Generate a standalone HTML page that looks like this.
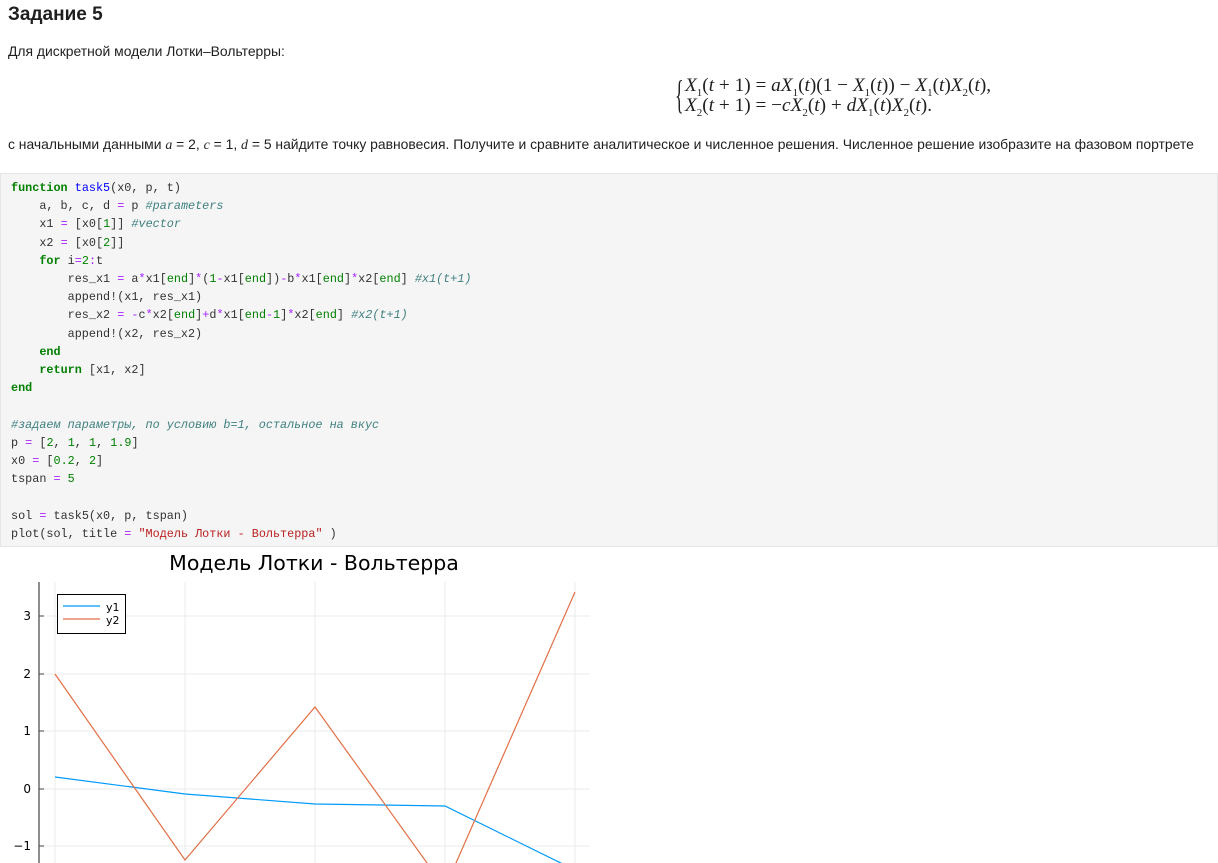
<!DOCTYPE html>
<html><head><meta charset="utf-8"><style>
body{margin:0;width:1218px;height:863px;overflow:hidden;background:#fff;font-family:"Liberation Sans","DejaVu Sans",sans-serif;color:#1f1f1f}
h2{position:absolute;left:8px;top:4px;margin:0;font-size:19px;font-weight:bold}
.p{position:absolute;left:8px;font-size:13.9px;white-space:nowrap}
.m{font-family:"Liberation Serif",serif;font-style:italic}
pre{position:absolute;left:0;top:173px;width:1218px;height:374px;margin:0;background:#f5f5f5;border:1px solid #e5e5e5;font-family:"Liberation Mono",monospace;font-size:11.8px;line-height:18.2px;padding:5px 10px;box-sizing:border-box;color:#333}
.k{color:#008000;font-weight:bold}.f{color:#0000ff}.c{color:#408080;font-style:italic}.n{color:#008000}.o{color:#aa22ff}.s{color:#ba2121}
.fm sub{font-size:11px;line-height:0}
</style></head><body>
<h2>Задание 5</h2>
<div class="p" style="top:43px">Для дискретной модели Лотки–Вольтерры:</div>
<div class="fm" style="position:absolute;left:675px;top:76px;font-family:'Liberation Serif',serif;font-size:19.3px;line-height:20px;white-space:nowrap">
<span style="position:absolute;left:0;top:-3px;font-size:40px;line-height:44px;transform:scaleX(0.45);transform-origin:left">{</span>
<div style="margin-left:10px"><i>X</i><sub>1</sub>(<i>t</i> + 1) = <i>aX</i><sub>1</sub>(<i>t</i>)(1 − <i>X</i><sub>1</sub>(<i>t</i>)) − <i>X</i><sub>1</sub>(<i>t</i>)<i>X</i><sub>2</sub>(<i>t</i>),</div>
<div style="margin-left:10px"><i>X</i><sub>2</sub>(<i>t</i> + 1) = −<i>cX</i><sub>2</sub>(<i>t</i>) + <i>dX</i><sub>1</sub>(<i>t</i>)<i>X</i><sub>2</sub>(<i>t</i>).</div>
</div>
<div class="p" style="top:136px">с начальными данными <span class="m">a</span> = 2, <span class="m">c</span> = 1, <span class="m">d</span> = 5 найдите точку равновесия. Получите и сравните аналитическое и численное решения. Численное решение изобразите на фазовом портрете</div>
<pre><span class="k">function</span> <span class="f">task5</span>(x0, p, t)
    a, b, c, d <span class="o">=</span> p <span class="c">#parameters</span>
    x1 <span class="o">=</span> [x0[<span class="n">1</span>]] <span class="c">#vector</span>
    x2 <span class="o">=</span> [x0[<span class="n">2</span>]]
    <span class="k">for</span> i<span class="o">=</span><span class="n">2</span><span class="o">:</span>t
        res_x1 <span class="o">=</span> a<span class="o">*</span>x1[<span class="n">end</span>]<span class="o">*</span>(<span class="n">1</span><span class="o">-</span>x1[<span class="n">end</span>])<span class="o">-</span>b<span class="o">*</span>x1[<span class="n">end</span>]<span class="o">*</span>x2[<span class="n">end</span>] <span class="c">#x1(t+1)</span>
        append!(x1, res_x1)
        res_x2 <span class="o">=</span> <span class="o">-</span>c<span class="o">*</span>x2[<span class="n">end</span>]<span class="o">+</span>d<span class="o">*</span>x1[<span class="n">end</span><span class="o">-</span><span class="n">1</span>]<span class="o">*</span>x2[<span class="n">end</span>] <span class="c">#x2(t+1)</span>
        append!(x2, res_x2)
    <span class="k">end</span>
    <span class="k">return</span> [x1, x2]
<span class="k">end</span>

<span class="c">#задаем параметры, по условию b=1, остальное на вкус</span>
p <span class="o">=</span> [<span class="n">2</span>, <span class="n">1</span>, <span class="n">1</span>, <span class="n">1.9</span>]
x0 <span class="o">=</span> [<span class="n">0.2</span>, <span class="n">2</span>]
tspan <span class="o">=</span> <span class="n">5</span>

sol <span class="o">=</span> task5(x0, p, tspan)
plot(sol, title <span class="o">=</span> <span class="s">"Модель Лотки - Вольтерра"</span> )</pre>
<svg style="position:absolute;left:0;top:548px" width="600" height="315" font-family="DejaVu Sans,sans-serif">
<text x="314" y="22" font-size="20.5" text-anchor="middle" fill="#000">Модель Лотки - Вольтерра</text>
<g stroke="#ebebeb" stroke-width="1">
<line x1="55" y1="34" x2="55" y2="315"/><line x1="185" y1="34" x2="185" y2="315"/><line x1="315" y1="34" x2="315" y2="315"/><line x1="445" y1="34" x2="445" y2="315"/><line x1="575" y1="34" x2="575" y2="315"/>
<line x1="39" y1="68" x2="590" y2="68"/><line x1="39" y1="126" x2="590" y2="126"/><line x1="39" y1="183" x2="590" y2="183"/><line x1="39" y1="241" x2="590" y2="241"/><line x1="39" y1="298" x2="590" y2="298"/>
</g>
<line x1="39" y1="34" x2="39" y2="315" stroke="#444" stroke-width="1.2"/>
<g stroke="#444"><line x1="39" y1="68" x2="44" y2="68"/><line x1="39" y1="126" x2="44" y2="126"/><line x1="39" y1="183" x2="44" y2="183"/><line x1="39" y1="241" x2="44" y2="241"/><line x1="39" y1="298" x2="44" y2="298"/></g>
<g font-size="12" text-anchor="end" fill="#000"><text x="31" y="72">3</text><text x="31" y="130">2</text><text x="31" y="187">1</text><text x="31" y="245">0</text><text x="31" y="302">−1</text></g>
<polyline fill="none" stroke="#009af9" stroke-width="1.2" points="55,229 185,246 315,256 445,258 575,322"/>
<polyline fill="none" stroke="#e26f46" stroke-width="1.2" points="55,126 185,312 315,159 445,340 575,44"/>
<rect x="57.5" y="46.5" width="68" height="39" fill="#fff" stroke="#000"/>
<line x1="63" y1="58" x2="100" y2="58" stroke="#009af9" stroke-width="1.2"/>
<line x1="63" y1="71" x2="100" y2="71" stroke="#e26f46" stroke-width="1.2"/>
<text x="106" y="63" font-size="11">y1</text><text x="106" y="76" font-size="11">y2</text>
</svg>
</body></html>
